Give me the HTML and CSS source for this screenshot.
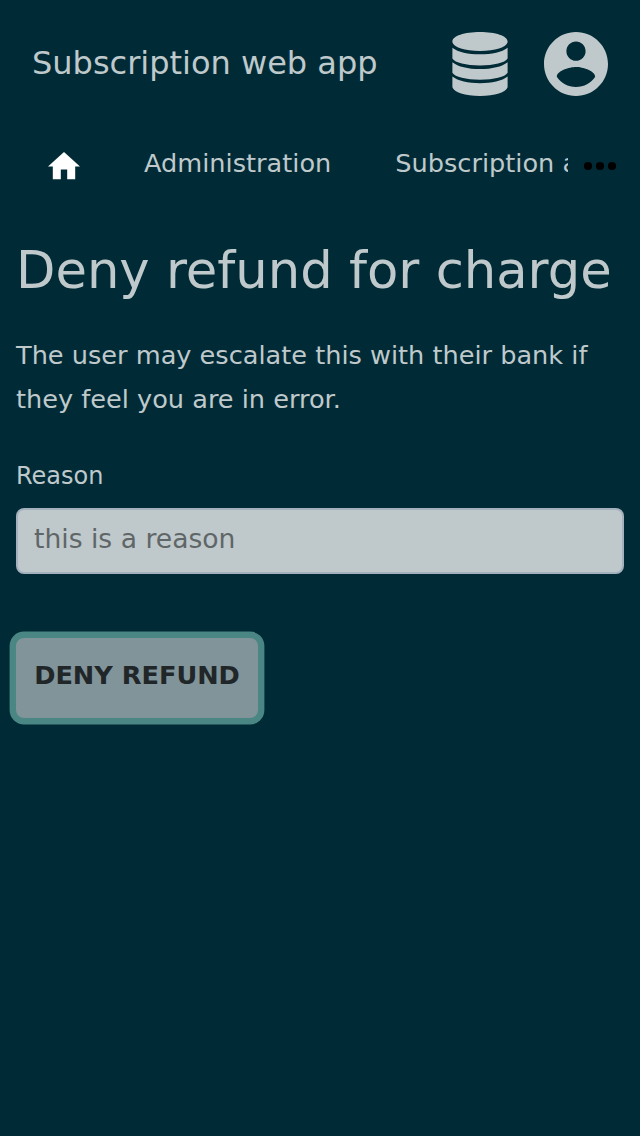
FILE: index.html
```html
<!DOCTYPE html>
<html lang="en">
<head>
<meta charset="utf-8">
<title>Deny refund for charge</title>
<link rel="stylesheet" href="styles.css">
</head>
<body>
<header class="header">
  <div class="brand">Subscription web app</div>
  <svg class="db" viewBox="0 0 56 64"><path d="M28 0C43.500 0 55.600 4 55.600 9.400v.8C54.500 15.300 43 18.900 28 18.900S1.500 15.300.4 10.200v-.8C.4 4 12.500 0 28 0zM.4 15.700C6 20.300 16 22.300 28 22.300s22-2 27.600-6.600V26.500C53 30.800 42 33.400 28 33.400S3 30.800.4 26.500zM.4 30.200C6 34.800 16 37 28 37s22-2.200 27.600-6.800V40.800C53 45.100 42 47.700 28 47.700S3 45.100.4 40.800zM.4 44.600C6 49.200 16 51.200 28 51.200s22-2 27.600-6.600V55.300C54 60.500 43 64 28 64S2 60.500.4 55.300z"/></svg>
  <svg class="user" viewBox="2 2 20 20"><path d="M12 2C6.480 2 2 6.480 2 12s4.480 10 10 10 10-4.480 10-10S17.520 2 12 2zm0 3c1.660 0 3 1.340 3 3s-1.340 3-3 3-3-1.340-3-3 1.340-3 3-3zm0 14.200c-2.500 0-4.710-1.280-6-3.220.03-1.990 4-3.080 6-3.080 1.990 0 5.970 1.090 6 3.080-1.290 1.940-3.500 3.220-6 3.220z"/></svg>
</header>
<nav class="nav">
  <svg class="home" viewBox="2 3 20 17"><path d="M10 20v-6h4v6h5v-8h3L12 3 2 12h3v8z"/></svg>
  <div class="links"><a>Administration</a><a>Subscription administration</a></div>
  <svg class="more" viewBox="0 0 34 10"><circle cx="5" cy="5" r="4.100"/><circle cx="17" cy="5" r="4.100"/><circle cx="29" cy="5" r="4.100"/></svg>
</nav>
<main class="main">
  <h1 class="title">Deny refund for charge</h1>
  <p class="note">The user may escalate this with their bank if they feel you are in error.</p>
  <label class="label" for="reason">Reason</label>
  <input class="input" id="reason" value="this is a reason">
  <button class="button">DENY REFUND</button>
</main>
</body>
</html>
```

FILE: styles.css
```css
* { box-sizing: border-box; }
body { margin: 0; min-height: 1136px; background: #002b36; color: #bfc9cb; font-family: "DejaVu Sans", sans-serif; }
.header { display: flex; align-items: center; height: 128px; padding: 0 32px; fill: #bfc9cb; }
.brand { flex: 1; font-size: 32px; line-height: 40px; padding-bottom: 2px; }
.db { width: 56px; height: 64px; margin-right: 36px; }
.user { width: 64px; height: 64px; }
.nav { display: flex; height: 80px; padding: 0 23px 0 48px; font-size: 25.6px; }
.home { flex: none; width: 32px; height: 27.2px; margin: 24.400px 64px 0 0; fill: #fff; }
.links { display: flex; flex: none; gap: 64px; width: 424px; overflow: hidden; white-space: nowrap; line-height: 44px; padding-top: 13px; }
.more { flex: none; width: 34px; height: 10px; margin: 33px 0 0 15px; }
.main { display: flex; flex-direction: column; align-items: flex-start; padding: 30px 16px; }
.title { margin: 0; font-size: 51.2px; line-height: 64px; font-weight: 400; white-space: nowrap; }
.note { margin: 31px 0 0; font-size: 25.6px; line-height: 44px; }
.label { margin-top: 37px; font-size: 24px; line-height: 36px; }
.input { width: 100%; height: 66px; margin: 14px 0 0; padding: 0 16px 6px; border: 2px solid #a3b0bd; border-radius: 8px; background: #bfc9cb; color: #5f6668; font: 26.600px "DejaVu Sans", sans-serif; }
.button { width: 242px; height: 80px; margin: 64px 0 0; padding: 0 0 6px; border: 0; border-radius: 8px; background: #80949a; color: #212628; box-shadow: 0 0 0 6.400px #4a8684; font: bold 25.600px "DejaVu Sans", sans-serif; }
```
